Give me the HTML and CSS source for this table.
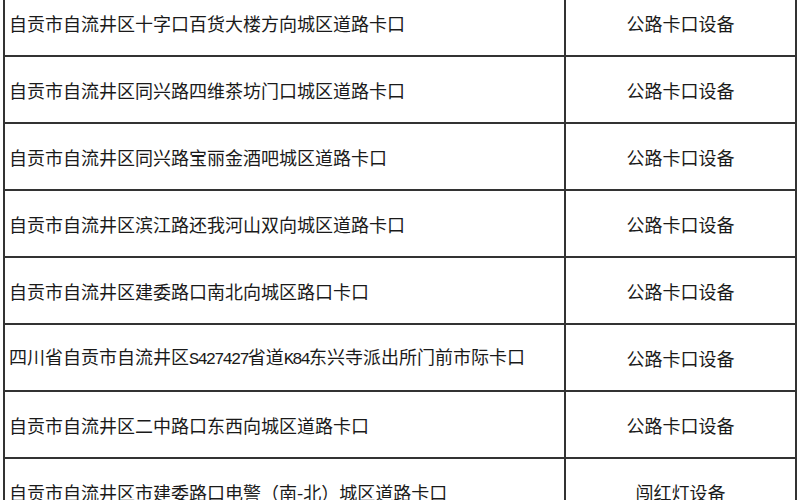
FILE: index.html
```html
<!DOCTYPE html>
<html lang="zh-CN">
<head>
<meta charset="utf-8">
<title>卡口设备</title>
<link rel="stylesheet" href="styles.css">
</head>
<body>
<div class="wrap">
<table class="list">
<colgroup><col class="c-name"><col class="c-type"></colgroup>
<tbody>
<tr><td class="name">自贡市自流井区十字口百货大楼方向城区道路卡口</td><td class="type">公路卡口设备</td></tr>
<tr><td class="name">自贡市自流井区同兴路四维茶坊门口城区道路卡口</td><td class="type">公路卡口设备</td></tr>
<tr><td class="name">自贡市自流井区同兴路宝丽金酒吧城区道路卡口</td><td class="type">公路卡口设备</td></tr>
<tr><td class="name">自贡市自流井区滨江路还我河山双向城区道路卡口</td><td class="type">公路卡口设备</td></tr>
<tr><td class="name">自贡市自流井区建委路口南北向城区路口卡口</td><td class="type">公路卡口设备</td></tr>
<tr><td class="name">四川省自贡市自流井区<span class="latin">S427427</span>省道<span class="latin">K84</span>东兴寺派出所门前市际卡口</td><td class="type">公路卡口设备</td></tr>
<tr><td class="name">自贡市自流井区二中路口东西向城区道路卡口</td><td class="type">公路卡口设备</td></tr>
<tr><td class="name">自贡市自流井区市建委路口电警（南-北）城区道路卡口</td><td class="type">闯红灯设备</td></tr>
</tbody>
</table>
</div>
</body>
</html>
```
FILE: styles.css
```css
html, body {
  margin: 0;
  padding: 0;
  background: #ffffff;
  overflow: hidden;
}
.wrap {
  margin-top: -12px;
  padding-left: 3px;
}
.list {
  border-collapse: collapse;
  table-layout: fixed;
  width: 792px;
  font-family: "Noto Sans CJK SC", "Noto Sans", sans-serif;
  font-size: 18px;
  color: #1a1a1a;
}
.c-name { width: 561px; }
.c-type { width: 231px; }
.list td {
  border: 2px solid #333333;
  height: 65px;
  padding: 0;
  vertical-align: middle;
  white-space: nowrap;
  line-height: 24px;
}
.name {
  text-align: left;
  padding-left: 4px !important;
}
.type {
  text-align: center;
}
.latin {
  font-family: "Liberation Mono", "DejaVu Sans Mono", monospace;
  font-size: 17px;
  letter-spacing: -1.8px;
}
```
